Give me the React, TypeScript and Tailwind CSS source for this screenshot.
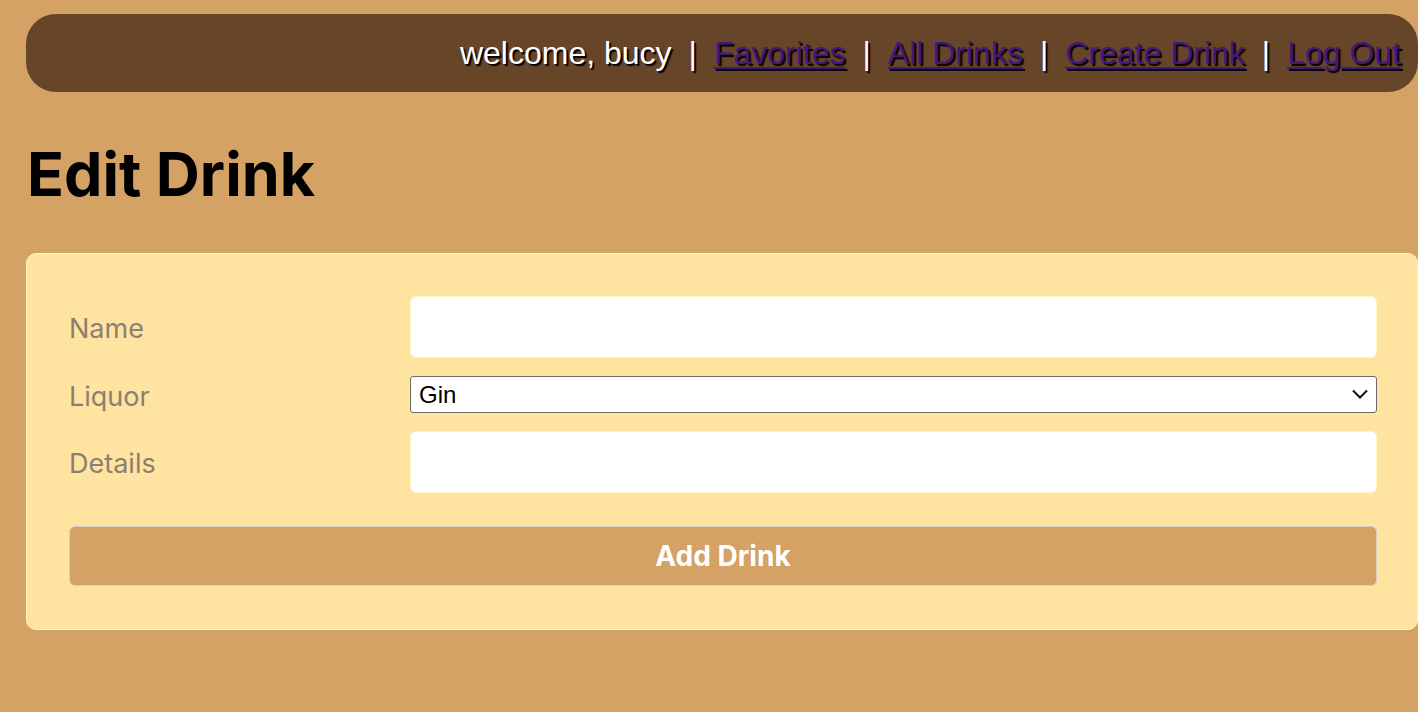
import React from "react";

export default function App() {
  const links = ["Favorites", "All Drinks", "Create Drink", "Log Out"];
  return (
    <div className="min-h-[712px] w-full overflow-hidden bg-[#d4a265] font-['Inter',sans-serif]">
      <div className="ml-[26px] w-[1392px] pt-[14px]">
        <nav className="flex h-[78px] items-center justify-end rounded-[30px] bg-[#674528] pr-[17px] font-['Liberation_Sans',Arial,sans-serif] text-[32px]">
          <span className="text-white [text-shadow:2px_2px_1px_#000]">welcome, bucy</span>
          {links.map((l) => (
            <React.Fragment key={l}>
              <span className="mx-[17px] text-white [text-shadow:2px_2px_1px_#000]">|</span>
              <a href="#" className="text-[#44187a] underline decoration-[2px] underline-offset-[3px] [text-shadow:2px_2px_1px_#000]">
                {l}
              </a>
            </React.Fragment>
          ))}
        </nav>
        <h1 className="ml-[1px] mt-[46px] text-[61px] font-bold leading-[72px] text-black">Edit Drink</h1>
        <div className="mt-[43px] rounded-[10px] border border-[#fff3b8] bg-[#ffe3a0] pl-[42px] pr-[40px] pb-[43px] pt-[42px]">
          <div className="grid grid-cols-[341px_1fr] items-center gap-y-[18px]">
            <label className="pt-[4px] text-[27px] leading-[32px] text-[#8a8070]">Name</label>
            <input className="h-[62px] rounded-[6px] border border-[#fff6c4] bg-white px-3 outline-none" />
            <label className="pt-[4px] text-[27px] leading-[32px] text-[#8a8070]">Liquor</label>
            <div className="relative h-[37px]">
              <select className="h-[37px] w-full appearance-none rounded-[3px] border-[1.5px] border-[#6b6b6b] bg-white pl-[8px] font-['Liberation_Sans',Arial,sans-serif] text-[24px] leading-[28px] text-black outline-none">
                <option>Gin</option>
              </select>
              <svg className="pointer-events-none absolute right-[8px] top-[10px]" width="18" height="16" viewBox="0 0 18 16">
                <path d="M2 4.5 L9 11.5 L16 4.5" fill="none" stroke="#111" strokeWidth="2" />
              </svg>
            </div>
            <label className="pt-[4px] text-[27px] leading-[32px] text-[#8a8070]">Details</label>
            <input className="h-[62px] rounded-[6px] border border-[#fff6c4] bg-white px-3 outline-none" />
          </div>
          <button className="mt-[33px] flex h-[60px] w-full items-center justify-center rounded-[6px] border border-[#d9cfc0] bg-[#d4a265] text-[28px] font-bold text-white">
            Add Drink
          </button>
        </div>
      </div>
    </div>
  );
}
